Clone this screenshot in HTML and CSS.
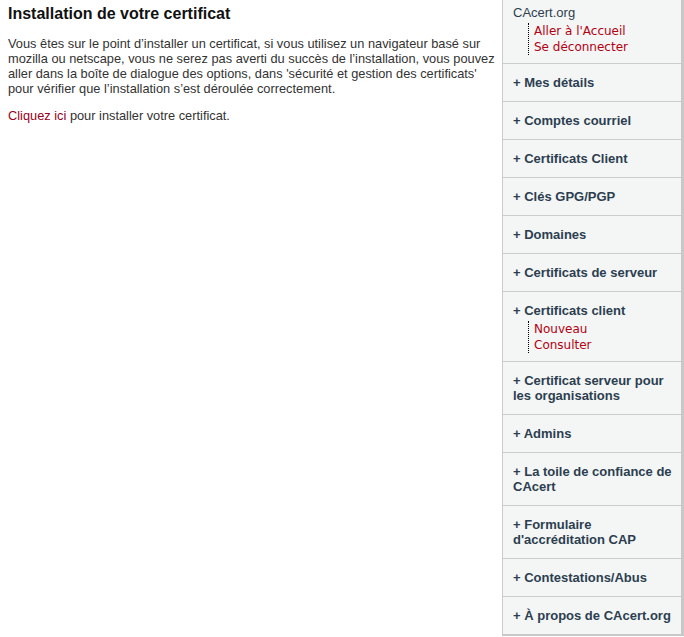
FILE: index.html
```html
<!DOCTYPE html>
<html lang="fr">
<head>
    <meta charset="UTF-8">
    <title>CAcert.org</title>
    <link rel="stylesheet" href="styles.css">
</head>
<body>
    <div class="page">
        <div class="content">
            <h3>Installation de votre certificat</h3>
            <p>Vous êtes sur le point d’installer un certificat, si vous utilisez un navigateur basé sur mozilla ou netscape, vous ne serez pas averti du succès de l’installation, vous pouvez aller dans la boîte de dialogue des options, dans 'sécurité et gestion des certificats' pour vérifier que l’installation s’est déroulée correctement.</p>
            <p><a href="#">Cliquez ici</a> pour installer votre certificat.</p>
        </div>
        <div class="sidebar">
            <div class="menu top open">
                <div class="title">CAcert.org</div>
                <ul class="sub">
                    <li><a href="#">Aller à l'Accueil</a></li>
                    <li><a href="#">Se déconnecter</a></li>
                </ul>
            </div>
            <div class="menu"><div class="head">+ Mes détails</div></div>
            <div class="menu"><div class="head">+ Comptes courriel</div></div>
            <div class="menu"><div class="head">+ Certificats Client</div></div>
            <div class="menu"><div class="head">+ Clés GPG/PGP</div></div>
            <div class="menu"><div class="head">+ Domaines</div></div>
            <div class="menu"><div class="head">+ Certificats de serveur</div></div>
            <div class="menu open">
                <div class="head">+ Certificats client</div>
                <ul class="sub">
                    <li><a href="#">Nouveau</a></li>
                    <li><a href="#">Consulter</a></li>
                </ul>
            </div>
            <div class="menu"><div class="head">+ Certificat serveur pour les organisations</div></div>
            <div class="menu"><div class="head">+ Admins</div></div>
            <div class="menu"><div class="head">+ La toile de confiance de CAcert</div></div>
            <div class="menu"><div class="head">+ Formulaire d'accréditation CAP</div></div>
            <div class="menu"><div class="head">+ Contestations/Abus</div></div>
            <div class="menu"><div class="head">+ À propos de CAcert.org</div></div>
        </div>
    </div>
</body>
</html>
```

FILE: styles.css
```css
* {
    padding: 0;
    margin: 0;
    box-sizing: border-box;
}
body {
    font-family: "Liberation Sans", Arial, sans-serif;
    font-size: 12px;
    color: #333;
    background-color: #fff;
}
.page {
    display: flex;
    align-items: flex-start;
}
.content {
    flex: 1;
    padding: 5px 2px 0 8px;
}
h3 {
    font-size: 16px;
    line-height: 18px;
    color: #111;
    margin-bottom: 13px;
}
.content p {
    font-size: 12.8px;
    line-height: 15px;
    margin-bottom: 12px;
}
.content a {
    color: #990022;
    text-decoration: none;
}
.sidebar {
    width: 182px;
    flex-shrink: 0;
    background-color: #f4f6f5;
    border-left: 1px solid #ccc;
    border-right: 3px solid #c8c8c8;
    border-bottom: 2px solid #c8c8c8;
}
.menu {
    border-bottom: 1px solid #ccc;
    padding: 11px 8px 11px 10px;
}
.menu.open {
    padding-bottom: 8px;
}
.menu.top {
    padding-top: 5px;
}
.menu:last-child {
    border-bottom: none;
}
.title {
    font-size: 13px;
    line-height: 15px;
    color: #2c3e50;
}
.head {
    font-size: 13px;
    font-weight: bold;
    line-height: 15px;
    color: #2c3e50;
}
.sub {
    list-style: none;
    margin: 3px 0 0 15px;
    padding-left: 5px;
    border-left: 1px dotted #000;
}
.sub li {
    font-family: "DejaVu Sans", Verdana, sans-serif;
    font-size: 12px;
    line-height: 16px;
}
.sub a {
    color: #b30012;
    text-decoration: none;
}
```
